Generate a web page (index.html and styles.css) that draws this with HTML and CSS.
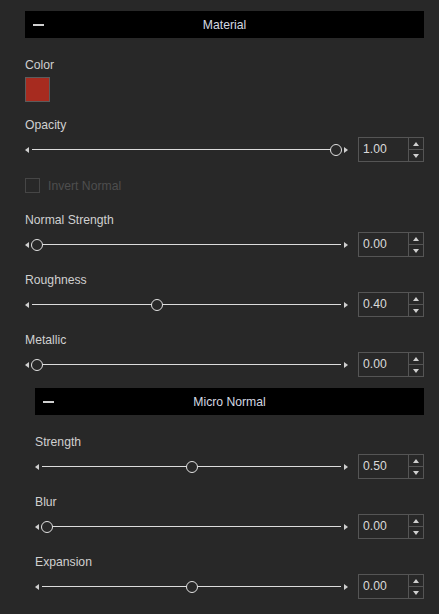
FILE: index.html
```html
<!DOCTYPE html>
<html>
<head>
<meta charset="utf-8">
<link rel="stylesheet" href="styles.css">
</head>
<body>
<div class="panel">
  <div class="header"><span class="dash"></span><span class="title">Material</span><span></span></div>
  <div class="fields">
    <div class="field">
      <div class="label">Color</div>
      <div class="swatch"></div>
    </div>
    <div class="field">
      <div class="label">Opacity</div>
      <div class="row">
        <div class="slider" style="--v:1"><span class="arr-l"></span><span class="track"></span><span class="arr-r"></span><span class="thumb"></span></div>
        <div class="spin"><span class="val">1.00</span><span class="btns"><span class="btn"><span class="up"></span></span><span class="btn"><span class="down"></span></span></span></div>
      </div>
    </div>
    <div class="check"><span class="box"></span><span class="check-text">Invert Normal</span></div>
    <div class="field">
      <div class="label">Normal Strength</div>
      <div class="row">
        <div class="slider" style="--v:0"><span class="arr-l"></span><span class="track"></span><span class="arr-r"></span><span class="thumb"></span></div>
        <div class="spin"><span class="val">0.00</span><span class="btns"><span class="btn"><span class="up"></span></span><span class="btn"><span class="down"></span></span></span></div>
      </div>
    </div>
    <div class="field">
      <div class="label">Roughness</div>
      <div class="row">
        <div class="slider" style="--v:0.4"><span class="arr-l"></span><span class="track"></span><span class="arr-r"></span><span class="thumb"></span></div>
        <div class="spin"><span class="val">0.40</span><span class="btns"><span class="btn"><span class="up"></span></span><span class="btn"><span class="down"></span></span></span></div>
      </div>
    </div>
    <div class="field">
      <div class="label">Metallic</div>
      <div class="row">
        <div class="slider" style="--v:0"><span class="arr-l"></span><span class="track"></span><span class="arr-r"></span><span class="thumb"></span></div>
        <div class="spin"><span class="val">0.00</span><span class="btns"><span class="btn"><span class="up"></span></span><span class="btn"><span class="down"></span></span></span></div>
      </div>
    </div>
  </div>
  <div class="sub">
    <div class="header"><span class="dash"></span><span class="title">Micro Normal</span><span></span></div>
    <div class="fields">
      <div class="field">
        <div class="label">Strength</div>
        <div class="row">
          <div class="slider" style="--v:0.5"><span class="arr-l"></span><span class="track"></span><span class="arr-r"></span><span class="thumb"></span></div>
          <div class="spin"><span class="val">0.50</span><span class="btns"><span class="btn"><span class="up"></span></span><span class="btn"><span class="down"></span></span></span></div>
        </div>
      </div>
      <div class="field">
        <div class="label">Blur</div>
        <div class="row">
          <div class="slider" style="--v:0"><span class="arr-l"></span><span class="track"></span><span class="arr-r"></span><span class="thumb"></span></div>
          <div class="spin"><span class="val">0.00</span><span class="btns"><span class="btn"><span class="up"></span></span><span class="btn"><span class="down"></span></span></span></div>
        </div>
      </div>
      <div class="field">
        <div class="label">Expansion</div>
        <div class="row">
          <div class="slider" style="--v:0.5"><span class="arr-l"></span><span class="track"></span><span class="arr-r"></span><span class="thumb"></span></div>
          <div class="spin"><span class="val">0.00</span><span class="btns"><span class="btn"><span class="up"></span></span><span class="btn"><span class="down"></span></span></span></div>
        </div>
      </div>
    </div>
  </div>
</div>
</body>
</html>
```
FILE: styles.css
```css
html, body {
  margin: 0;
  padding: 0;
  background: #282828;
}
body {
  font-family: "Liberation Sans", Arial, sans-serif;
  font-size: 12.2px;
  color: #d0d0d0;
  height: 614px;
  overflow: hidden;
}
.panel {
  margin: 11px 15px 0 25px;
}
.header {
  height: 27px;
  background: #000;
  display: grid;
  grid-template-columns: 1fr auto 1fr;
  align-items: center;
}
.dash {
  width: 11px;
  height: 2px;
  background: #cfcfcf;
  margin-left: 8px;
}
.title {
  color: #d4d8e0;
  line-height: 16px;
}
.fields {
  display: flex;
  flex-direction: column;
  gap: 16px;
  padding-top: 20px;
}
.field {
  display: flex;
  flex-direction: column;
  gap: 5px;
}
.label {
  line-height: 14px;
}
.swatch {
  width: 25px;
  height: 25px;
  box-sizing: border-box;
  background: #a72b1f;
  border: 1px solid #5c5c5c;
}
.row {
  display: flex;
  align-items: center;
  gap: 10px;
  height: 25px;
}
.slider {
  flex: 1;
  position: relative;
  display: flex;
  align-items: center;
  height: 25px;
}
.arr-l {
  width: 0;
  height: 0;
  border-top: 3px solid transparent;
  border-bottom: 3px solid transparent;
  border-right: 4px solid #cfcfcf;
}
.arr-r {
  width: 0;
  height: 0;
  border-top: 3px solid transparent;
  border-bottom: 3px solid transparent;
  border-left: 4px solid #cfcfcf;
}
.track {
  flex: 1;
  height: 1px;
  background: #dcdcdc;
  margin: 0 3px;
}
.thumb {
  position: absolute;
  top: 50%;
  left: calc(12px + var(--v) * (100% - 24px));
  width: 12px;
  height: 12px;
  box-sizing: border-box;
  border: 1.5px solid #e2e2e2;
  border-radius: 50%;
  background: #282828;
  transform: translate(-50%, -50%);
}
.spin {
  width: 66px;
  height: 25px;
  box-sizing: border-box;
  border: 1px solid #555;
  display: flex;
}
.val {
  flex: 1;
  padding-left: 4px;
  line-height: 23px;
  color: #dadada;
}
.btns {
  width: 14px;
  border-left: 1px solid #555;
  display: flex;
  flex-direction: column;
}
.btn {
  flex: 1;
  display: flex;
  align-items: center;
  justify-content: center;
}
.btn:first-child {
  border-bottom: 1px solid #555;
}
.up {
  width: 0;
  height: 0;
  border-left: 3px solid transparent;
  border-right: 3px solid transparent;
  border-bottom: 4px solid #cfcfcf;
}
.down {
  width: 0;
  height: 0;
  border-left: 3px solid transparent;
  border-right: 3px solid transparent;
  border-top: 4px solid #cfcfcf;
}
.check {
  display: flex;
  align-items: center;
  gap: 8px;
  height: 15px;
  margin-bottom: 4px;
}
.box {
  width: 15px;
  height: 15px;
  box-sizing: border-box;
  border: 1px solid #464646;
}
.check-text {
  color: #4e4e4e;
}
.sub {
  margin-top: 11px;
  padding-left: 10px;
}
```
